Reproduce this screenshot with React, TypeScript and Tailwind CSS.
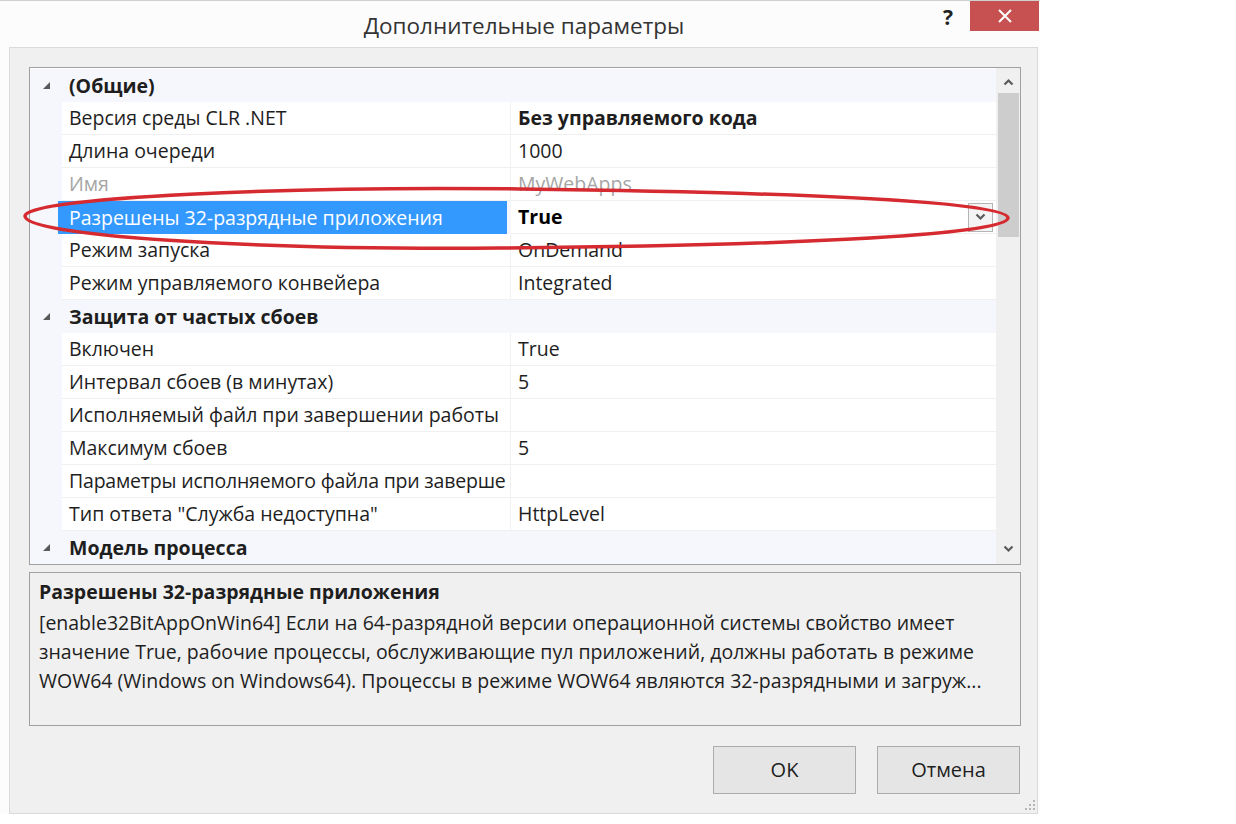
import React from "react"

type Row =
  | { kind: "cat"; label: string }
  | { kind: "prop"; name: string; value?: string; bold?: boolean; disabled?: boolean; selected?: boolean; tight?: boolean }

const rows: Row[] = [
  { kind: "cat", label: "(Общие)" },
  { kind: "prop", name: "Версия среды CLR .NET", value: "Без управляемого кода", bold: true },
  { kind: "prop", name: "Длина очереди", value: "1000" },
  { kind: "prop", name: "Имя", value: "MyWebApps", disabled: true },
  { kind: "prop", name: "Разрешены 32-разрядные приложения", value: "True", bold: true, selected: true },
  { kind: "prop", name: "Режим запуска", value: "OnDemand" },
  { kind: "prop", name: "Режим управляемого конвейера", value: "Integrated" },
  { kind: "cat", label: "Защита от частых сбоев" },
  { kind: "prop", name: "Включен", value: "True" },
  { kind: "prop", name: "Интервал сбоев (в минутах)", value: "5" },
  { kind: "prop", name: "Исполняемый файл при завершении работы" },
  { kind: "prop", name: "Максимум сбоев", value: "5" },
  { kind: "prop", name: "Параметры исполняемого файла при заверше", tight: true },
  { kind: "prop", name: "Тип ответа \"Служба недоступна\"", value: "HttpLevel" },
  { kind: "cat", label: "Модель процесса" },
]

function Expander() {
  return (
    <svg width="7" height="7" viewBox="0 0 7 7" className="shrink-0">
      <polygon points="7,0 7,7 0,7" fill="#595959" />
    </svg>
  )
}

function Chevron({ up }: { up?: boolean }) {
  return (
    <svg width="11" height="8" viewBox="0 0 11 8">
      <path
        d={up ? "M1.5 6.5 L5.5 2.5 L9.5 6.5" : "M1.5 1.5 L5.5 5.5 L9.5 1.5"}
        fill="none"
        stroke="#5a5a5a"
        strokeWidth="2.2"
      />
    </svg>
  )
}

function GridRow({ row }: { row: Row }) {
  if (row.kind === "cat") {
    return (
      <div className="h-[33px] flex items-center bg-[#f5f7fc]">
        <div className="w-[32px] flex justify-center pl-[1px]">
          <Expander />
        </div>
        <span className="pl-[7px] font-bold text-[#1e1e1e]">{row.label}</span>
      </div>
    )
  }
  const color = row.disabled ? "text-[#a5a5a5]" : "text-[#1e1e1e]"
  return (
    <div className="h-[33px] flex bg-[#f5f7fc]">
      <div className="w-[32px] shrink-0" />
      <div
        className={
          row.selected
            ? "w-[449px] shrink-0 -ml-[4px] mr-[4px] pl-[11px] flex items-center bg-[#3399ff] text-white overflow-hidden whitespace-nowrap"
            : `w-[449px] shrink-0 pl-[7px] flex items-center bg-white border-b border-[#f0f0f0] border-r border-r-[#f0f0f0] overflow-hidden whitespace-nowrap ${color}`
        }
      >
        <span className={row.tight ? "tracking-[-0.2px]" : ""}>{row.name}</span>
      </div>
      <div className="flex-1 flex items-center justify-between pl-[7px] pr-[3px] bg-white border-b border-[#f0f0f0]">
        <span className={`${row.bold ? "font-bold" : ""} ${row.selected ? "text-black" : color}`}>
          {row.value}
        </span>
        {row.selected && (
          <div className="w-[25px] h-[29px] border border-[#b4b4b4] bg-[#f4f4f4] flex items-center justify-center">
            <Chevron />
          </div>
        )}
      </div>
    </div>
  )
}

export default function App() {
  return (
    <div
      className="relative w-[1236px] h-[824px] bg-white overflow-hidden text-[19.5px] text-[#1e1e1e]"
      style={{ fontFamily: '"Open Sans", "Noto Sans", sans-serif' }}
    >
      <div className="w-[1040px] bg-[#fcfcfc] border-t border-[#d0d0d0]">
        {/* title bar */}
        <div className="h-[46px] flex items-start">
          <div className="flex-1 h-[50px] flex items-center justify-center pl-[122px] text-[22.5px] text-[#333]">
            Дополнительные параметры
          </div>
          <div className="w-[44px] h-[34px] flex items-center justify-center text-[21px] font-bold text-[#222]">
            ?
          </div>
          <div className="w-[69px] h-[30px] mr-[1px] bg-[#c75050] flex items-center justify-center">
            <svg width="14" height="14" viewBox="0 0 14 14">
              <path d="M1 1 L13 13 M13 1 L1 13" stroke="white" strokeWidth="2" />
            </svg>
          </div>
        </div>

        {/* body */}
        <div className="ml-[9px] mr-[2px] h-[767px] bg-[#f0f0f0] border border-[#dadada] pt-[19px] pl-[19px] pr-[16px] flex flex-col">
          {/* property grid */}
          <div className="h-[498px] border border-[#a0a0a0] bg-white flex">
            <div className="flex-1 flex flex-col overflow-hidden pt-[1px]">
              {rows.map((r, i) => (
                <GridRow key={i} row={r} />
              ))}
            </div>
            <div className="w-[24px] bg-[#f0f0f0] flex flex-col items-center">
              <div className="h-[25px] flex items-center justify-center pt-[3px]">
                <Chevron up />
              </div>
              <div className="w-[21px] h-[144px] bg-[#cdcdcd]" />
              <div className="flex-1" />
              <div className="h-[25px] flex items-center justify-center pb-[6px]">
                <Chevron />
              </div>
            </div>
          </div>

          {/* description */}
          <div className="mt-[7px] h-[154px] border border-[#a0a0a0] bg-[#f0f0f0] px-[9px] pt-[4px]">
            <div className="font-bold leading-[29px]">Разрешены 32-разрядные приложения</div>
            <div className="leading-[29px] pt-[2px] whitespace-nowrap">
              [enable32BitAppOnWin64] Если на 64-разрядной версии операционной системы свойство имеет
              <br />
              значение True, рабочие процессы, обслуживающие пул приложений, должны работать в режиме
              <br />
              WOW64 (Windows on Windows64). Процессы в режиме WOW64 являются 32-разрядными и загруж...
            </div>
          </div>

          {/* buttons */}
          <div className="mt-[20px] flex justify-end gap-[21px] pr-[1px]">
            <button className="w-[143px] h-[48px] border border-[#acacac] bg-[#e5e5e5] text-[20px] text-[#1e1e1e]">
              OK
            </button>
            <button className="w-[143px] h-[48px] border border-[#acacac] bg-[#e5e5e5] text-[20px] text-[#1e1e1e]">
              Отмена
            </button>
          </div>
          <div className="flex-1 flex items-end justify-end pb-[3px] -mr-[14px]">
            <svg width="10" height="10" viewBox="0 0 10 10">
              <g fill="#b5b5b5">
                <rect x="8" y="0" width="2" height="2" />
                <rect x="4" y="4" width="2" height="2" />
                <rect x="8" y="4" width="2" height="2" />
                <rect x="0" y="8" width="2" height="2" />
                <rect x="4" y="8" width="2" height="2" />
                <rect x="8" y="8" width="2" height="2" />
              </g>
            </svg>
          </div>
        </div>
      </div>

      {/* red annotation ellipse */}
      <svg className="absolute left-0 top-0 pointer-events-none" width="1236" height="824">
        <path
          d="M25 216 C25 197 300 186 520 189 C760 192 1008 200 1008 218 C1008 236 760 246 500 248 C250 250 25 236 25 216 Z"
          fill="none"
          stroke="#d52a30"
          strokeWidth="3.5"
        />
      </svg>
    </div>
  )
}
